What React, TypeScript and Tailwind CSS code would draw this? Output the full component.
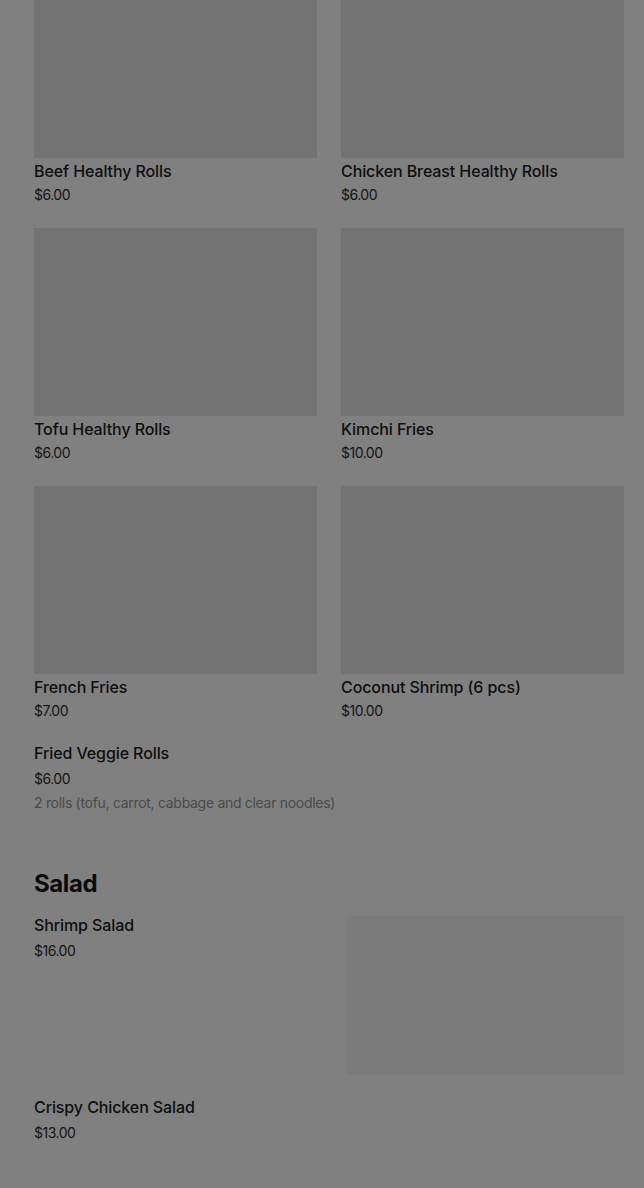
import React from "react";

const font = { fontFamily: "Inter, 'Noto Sans', Arial, sans-serif" };

function GridItem({ name, price }: { name: string; price: string }) {
  return (
    <div className="flex flex-col">
      <div className="h-[188px] bg-[#737373]" />
      <div className="mt-[1px] text-[16px] leading-[24px] font-medium text-[#0e0e0e] tracking-[-0.1px]">{name}</div>
      <div className="mt-[2px] text-[14px] leading-[20px] text-[#141414] tracking-[-0.5px]">{price}</div>
    </div>
  );
}

export default function App() {
  const items = [
    ["Beef Healthy Rolls", "$6.00"],
    ["Chicken Breast Healthy Rolls", "$6.00"],
    ["Tofu Healthy Rolls", "$6.00"],
    ["Kimchi Fries", "$10.00"],
    ["French Fries", "$7.00"],
    ["Coconut Shrimp (6 pcs)", "$10.00"],
  ];
  return (
    <div className="w-[644px] h-[1188px] overflow-hidden bg-[#808080]" style={font}>
      <div className="pl-[34px] pr-[20px]">
        <div className="mt-[-30px] grid grid-cols-2 gap-x-6 gap-y-[23px]">
          {items.map(([n, p]) => (
            <GridItem key={n} name={n} price={p} />
          ))}
        </div>
        <div className="mt-[20px]">
          <div className="text-[16px] leading-[24px] font-medium text-[#0e0e0e] tracking-[-0.1px]">Fried Veggie Rolls</div>
          <div className="mt-[4px] text-[14px] leading-[20px] text-[#141414] tracking-[-0.5px]">$6.00</div>
          <div className="mt-[4px] text-[14px] leading-[20px] text-[#4a4a4a] tracking-[-0.3px]">2 rolls (tofu, carrot, cabbage and clear noodles)</div>
        </div>
        <div className="mt-[55px] text-[24px] leading-[32px] font-bold text-[#0a0a0a] tracking-[-0.4px]">Salad</div>
        <div className="mt-[13px] flex justify-between">
          <div className="flex flex-col">
            <div className="text-[16px] leading-[24px] font-medium text-[#0e0e0e] tracking-[-0.1px]">Shrimp Salad</div>
            <div className="mt-[4px] text-[14px] leading-[20px] text-[#141414] tracking-[-0.5px]">$16.00</div>
          </div>
          <div className="mt-[3px] w-[277px] h-[158px] bg-[#7b7b7b]" />
        </div>
        <div className="mt-[21px]">
          <div className="text-[16px] leading-[24px] font-medium text-[#0e0e0e] tracking-[-0.1px]">Crispy Chicken Salad</div>
          <div className="mt-[4px] text-[14px] leading-[20px] text-[#141414] tracking-[-0.5px]">$13.00</div>
        </div>
      </div>
    </div>
  );
}
